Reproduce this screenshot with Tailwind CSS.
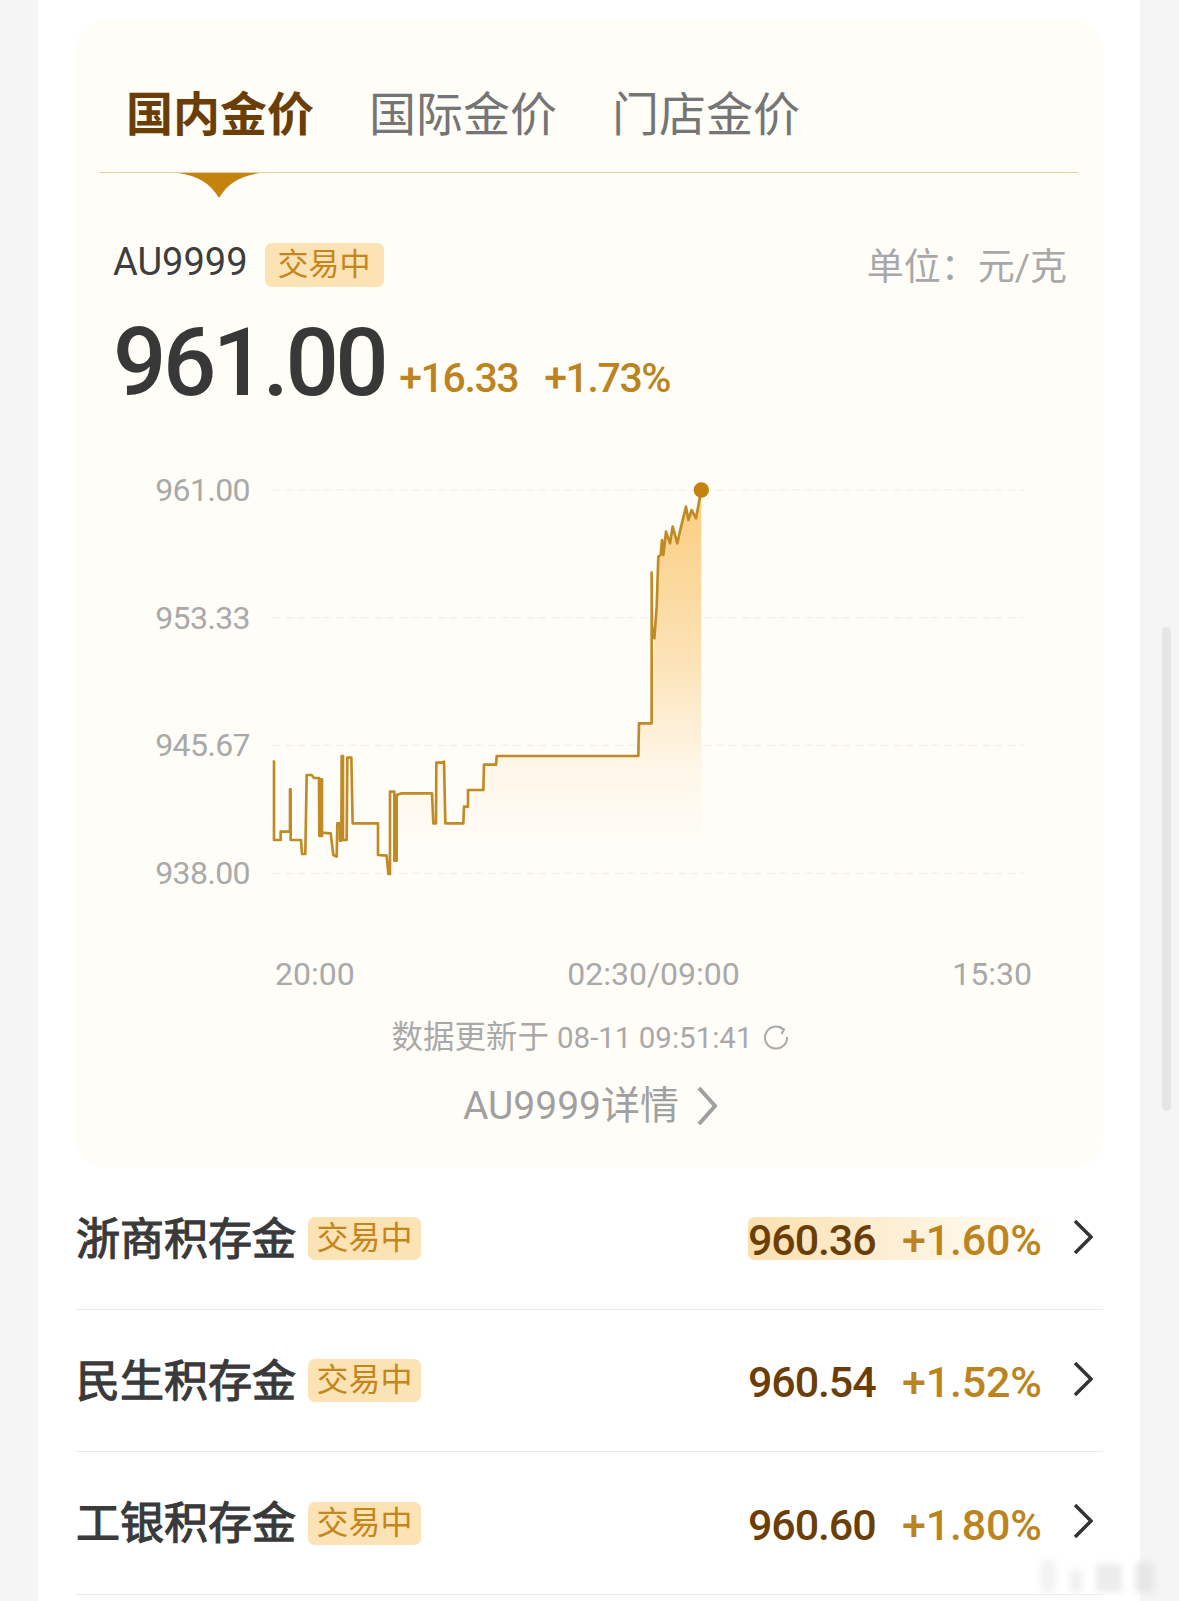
<!DOCTYPE html>
<html lang="zh-CN">
<head>
  <meta charset="UTF-8">
  <title>金价</title>
  <script src="https://cdn.jsdelivr.net/npm/@tailwindcss/browser@4"></script>
</head>
<body class="relative w-[1179px] h-[1601px] overflow-hidden flex bg-[#f5f5f5] font-['Roboto','Noto_Sans_CJK_SC',sans-serif]">

  <main class="ml-[38px] w-[1102px] h-full bg-white px-[37px] pt-[20px]">
    <!-- gold price card -->
    <section class="w-[1028px] h-[1148px] rounded-[32px] bg-[#fffdf8]">
      <div class="mx-[25px] h-[153px] pt-[72px] pl-[26px] flex gap-[55px] border-b border-[#e6cf9f] text-[47px] leading-[46px] text-[#757575]">
        <span class="font-bold text-[#6b3e07]">国内金价</span>
        <span>国际金价</span>
        <span>门店金价</span>
      </div>
      <svg class="ml-[103px] block" width="82" height="25" viewBox="0 0 82 25"><path d="M0 0H82C62 3 50 10 41 25C32 10 20 3 0 0Z" fill="#c4820f"/></svg>

      <div class="mt-[44px] pl-[38px] pr-[36px] flex items-center h-[46px]">
        <span class="-mt-[6px] text-[38px] leading-[46px] text-[#3d3d3d]">AU9999</span>
        <span class="ml-[17px] h-[44px] w-[119px] rounded-[7px] bg-[#fbe3b5] text-[31px] leading-[44px] text-center text-[#c4861a]">交易中</span>
        <span class="ml-auto mt-[6px] text-[37px] leading-[46px] text-[#a8a8a8]">单位：元/克</span>
      </div>

      <div class="mt-[22px] pl-[38px] flex items-baseline h-[106px]">
        <span class="text-[94px] leading-[106px] font-medium tracking-[-3.5px] text-[#383838]">961.00</span>
        <span class="ml-[14px] -translate-y-[3px] text-[41px] font-medium tracking-[-1.4px] text-[#bc841f]">+16.33</span>
        <span class="ml-[26px] -translate-y-[3px] text-[41px] font-medium tracking-[-1.4px] text-[#bc841f]">+1.73%</span>
      </div>

      <!-- chart -->
      <div class="mt-[44px] flex h-[430px]">
        <div class="w-[175px] pt-[10px] flex flex-col gap-[87.67px] text-right text-[32px] leading-[40px] tracking-[-0.6px] text-[#a9a9a9]">
          <span>961.00</span>
          <span>953.33</span>
          <span>945.67</span>
          <span>938.00</span>
        </div>
        <svg class="ml-[10px] block" width="780" height="430" viewBox="60 0 2340 1290" fill="none">
          <defs>
            <linearGradient id="goldFill" gradientUnits="userSpaceOnUse" x1="0" y1="150" x2="0" y2="1170">
              <stop offset="0" stop-color="#fbcf85"/>
              <stop offset="0.45" stop-color="#fce3b8"/>
              <stop offset="0.75" stop-color="#fef6e8"/>
              <stop offset="1" stop-color="#fffdf8"/>
            </linearGradient>
          </defs>
          <g stroke="#f0ede5" stroke-width="3" stroke-dasharray="24 14">
            <path d="M98 90H2355"/>
            <path d="M98 473H2355"/>
            <path d="M98 856H2355"/>
            <path d="M98 1240H2355"/>
          </g>
          <path fill="url(#goldFill)" d="M470 1202L470 1005L485 1000L576 1000L580 1090L588 1090L589 908L605 908L612 905L616 1090L670 1090L672 1040L684 1040L684 990L730 990L732 914L768 914L770 888L1195 888L1197 790L1235 790L1243 535L1250 440L1255 290L1262 285L1266 240L1270 285L1278 215L1290 250L1298 200L1312 250L1322 205L1338 140L1345 180L1355 150L1368 175L1380 110L1384 90L1384 1200L470 1200Z"/>
          <path stroke="#c08a25" stroke-width="8" stroke-linejoin="round" d="M98 905L102 905L102 1140L122 1140L122 1115L150 1115L150 988L152 988L152 1140L183 1140L186 1182L196 1182L200 945L215 945L222 954L237 954L238 1128L246 1128L246 958L240 958L240 1118L272 1120L280 1185L290 1190L292 1090L300 1090L300 1142L304 1142L305 888L309 888L309 1140L320 1140L322 893L334 893L338 1090L414 1090L414 1185L440 1187L445 1242L450 1242L450 995L463 995L463 1202L470 1202L470 1005L485 1000L576 1000L580 1090L588 1090L589 908L605 908L612 905L616 1090L670 1090L672 1040L684 1040L684 990L730 990L732 914L768 914L770 888L1195 888L1197 790L1235 790L1235 338L1236 500L1243 535L1250 440L1255 290L1262 285L1266 240L1270 285L1278 215L1290 250L1298 200L1312 250L1322 205L1338 140L1345 180L1355 150L1368 175L1380 110L1384 90"/>
          <circle cx="1384" cy="90" r="23" fill="#c4820f"/>
        </svg>
      </div>

      <div class="mt-[64px] ml-[200px] w-[757px] flex justify-between text-[32px] leading-[40px] text-[#a9a9a9]">
        <span>20:00</span>
        <span>02:30/09:00</span>
        <span>15:30</span>
      </div>

      <div class="mt-[24px] h-[40px] flex items-center justify-center pl-[2px] text-[#a9a9a9]">
        <span class="text-[31.5px] leading-[40px]">数据更新于</span>
        <span class="ml-[8px] text-[29.5px] leading-[40px]">08-11 09:51:41</span>
        <svg class="ml-[10px] -mt-[2px]" width="26" height="26" viewBox="0 0 26 26" fill="none" stroke="#a9a9a9" stroke-width="2"><path d="M20.5 5.5A11 11 0 1 0 24 13"/><path d="M15.5 2.5L21 5.5L18.5 10"/></svg>
      </div>

      <div class="mt-[26px] h-[44px] flex items-center justify-center pl-[2px] text-[39px] leading-[44px] text-[#a0a0a0]">
        <span>AU9999详情</span>
        <svg class="ml-[18px]" width="20" height="38" viewBox="0 0 20 38" fill="none" stroke="#a0a0a0" stroke-width="4"><path d="M2 1L18 19L2 37"/></svg>
      </div>
    </section>

    <!-- bank list -->
    <div class="flex items-center h-[142px] border-b border-[#ebebeb] pr-[10px]">
      <span class="ml-[1px] mt-[2px] text-[44px] leading-[50px] text-[#3a3a3a] [-webkit-text-stroke:1.2px_#3a3a3a]">浙商积存金</span>
      <span class="ml-[12px] h-[43px] w-[113px] rounded-[7px] bg-[#fbe3b5] text-[32px] leading-[43px] text-center text-[#c4861a]">交易中</span>
      <div class="ml-auto flex items-center h-[43px] rounded-[7px] bg-gradient-to-r from-[#fbe0ae] to-white w-[307px]">
        <span class="w-[154px] mt-[4px] text-[43px] leading-[43px] font-medium tracking-[-1.1px] text-[#6b3e07]">960.36</span>
        <span class="mt-[4px] text-[43px] leading-[43px] font-medium tracking-[-0.2px] text-[#bc841f]">+1.60%</span>
      </div>
      <svg class="ml-[18px] -mt-[4px]" width="20" height="34" viewBox="0 0 20 34" fill="none" stroke="#333" stroke-width="3.5"><path d="M2 1L18 17L2 33"/></svg>
    </div>
    <div class="flex items-center h-[142px] border-b border-[#ebebeb] pr-[10px]">
      <span class="ml-[1px] mt-[2px] text-[44px] leading-[50px] text-[#3a3a3a] [-webkit-text-stroke:1.2px_#3a3a3a]">民生积存金</span>
      <span class="ml-[12px] h-[43px] w-[113px] rounded-[7px] bg-[#fbe3b5] text-[32px] leading-[43px] text-center text-[#c4861a]">交易中</span>
      <div class="ml-auto flex items-center h-[43px] w-[307px]">
        <span class="w-[154px] mt-[4px] text-[43px] leading-[43px] font-medium tracking-[-1.1px] text-[#6b3e07]">960.54</span>
        <span class="mt-[4px] text-[43px] leading-[43px] font-medium tracking-[-0.2px] text-[#bc841f]">+1.52%</span>
      </div>
      <svg class="ml-[18px] -mt-[4px]" width="20" height="34" viewBox="0 0 20 34" fill="none" stroke="#333" stroke-width="3.5"><path d="M2 1L18 17L2 33"/></svg>
    </div>
    <div class="flex items-center h-[143px] border-b border-[#ebebeb] pr-[10px]">
      <span class="ml-[1px] mt-[2px] text-[44px] leading-[50px] text-[#3a3a3a] [-webkit-text-stroke:1.2px_#3a3a3a]">工银积存金</span>
      <span class="ml-[12px] h-[43px] w-[113px] rounded-[7px] bg-[#fbe3b5] text-[32px] leading-[43px] text-center text-[#c4861a]">交易中</span>
      <div class="ml-auto flex items-center h-[43px] w-[307px]">
        <span class="w-[154px] mt-[4px] text-[43px] leading-[43px] font-medium tracking-[-1.1px] text-[#6b3e07]">960.60</span>
        <span class="mt-[4px] text-[43px] leading-[43px] font-medium tracking-[-0.2px] text-[#bc841f]">+1.80%</span>
      </div>
      <svg class="ml-[18px] -mt-[4px]" width="20" height="34" viewBox="0 0 20 34" fill="none" stroke="#333" stroke-width="3.5"><path d="M2 1L18 17L2 33"/></svg>
    </div>
  </main>

  <!-- scrollbar -->
  <div class="ml-[22px] mt-[627px] w-[9px] h-[484px] rounded-full bg-[#e6e6e6]"></div>

  <!-- blurred watermark -->
  <div class="absolute left-[1040px] top-[1556px] w-[130px] h-[36px] flex items-end gap-[14px] blur-[3px]">
    <div class="w-[16px] h-[32px] bg-[#f3f3f3] rounded-[2px]"></div>
    <div class="w-[12px] h-[22px] bg-[#f0f0f0]"></div>
    <div class="w-[26px] h-[28px] bg-[#ececec]"></div>
    <div class="w-[18px] h-[30px] bg-[#e6e6e6]"></div>
  </div>
</body>
</html>
